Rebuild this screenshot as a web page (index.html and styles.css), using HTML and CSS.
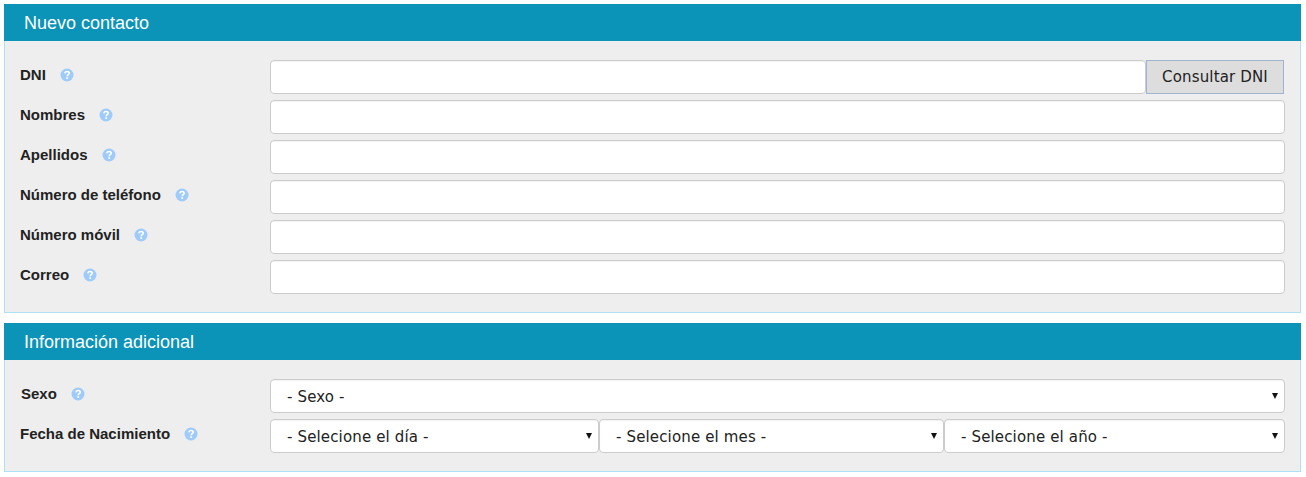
FILE: index.html
```html
<!DOCTYPE html>
<html lang="es">
<head>
<meta charset="utf-8">
<title>Nuevo contacto</title>
<link rel="stylesheet" href="styles.css">
</head>
<body>
<svg class="sprite" width="0" height="0"><symbol id="help" viewBox="0 0 14 14"><circle cx="7" cy="7" r="6.5" fill="#9fcbfa"/><path d="M4.9 5.4C5 4.2 5.9 3.5 7.1 3.5 8.3 3.5 9.2 4.2 9.2 5.3 9.2 6.7 7.2 6.8 7.2 8.3" fill="none" stroke="#fff" stroke-width="1.6"/><rect x="6.3" y="9.2" width="1.8" height="1.7" fill="#fff"/></symbol></svg>

<section class="panel panel-first">
  <h2 class="panel-title">Nuevo contacto</h2>
  <div class="panel-body">
    <div class="row">
      <label class="label">DNI <svg class="help"><use href="#help"/></svg></label>
      <div class="field field-group">
        <input class="input" type="text">
        <button class="btn" type="button">Consultar DNI</button>
      </div>
    </div>
    <div class="row">
      <label class="label">Nombres <svg class="help"><use href="#help"/></svg></label>
      <div class="field"><input class="input" type="text"></div>
    </div>
    <div class="row">
      <label class="label">Apellidos <svg class="help"><use href="#help"/></svg></label>
      <div class="field"><input class="input" type="text"></div>
    </div>
    <div class="row">
      <label class="label">Número de teléfono <svg class="help"><use href="#help"/></svg></label>
      <div class="field"><input class="input" type="text"></div>
    </div>
    <div class="row">
      <label class="label">Número móvil <svg class="help"><use href="#help"/></svg></label>
      <div class="field"><input class="input" type="text"></div>
    </div>
    <div class="row">
      <label class="label">Correo <svg class="help"><use href="#help"/></svg></label>
      <div class="field"><input class="input" type="text"></div>
    </div>
  </div>
</section>

<section class="panel">
  <h2 class="panel-title">Información adicional</h2>
  <div class="panel-body">
    <div class="row">
      <label class="label label-sexo">Sexo <svg class="help"><use href="#help"/></svg></label>
      <div class="field">
        <div class="select-wrap"><select class="select"><option>- Sexo -</option></select></div>
      </div>
    </div>
    <div class="row">
      <label class="label">Fecha de Nacimiento <svg class="help"><use href="#help"/></svg></label>
      <div class="field field-dates">
        <div class="select-wrap"><select class="select"><option>- Selecione el día -</option></select></div>
        <div class="select-wrap"><select class="select"><option>- Selecione el mes -</option></select></div>
        <div class="select-wrap"><select class="select"><option>- Selecione el año -</option></select></div>
      </div>
    </div>
  </div>
</section>
</body>
</html>
```

FILE: styles.css
```css
* { box-sizing: border-box; }

html, body { background: #fff; }

body {
  margin: 0;
  padding: 4px 5px 0 4px;
  font-family: "Liberation Sans", Arial, sans-serif;
  color: #222;
}

.sprite { position: absolute; }

.panel-first { margin-bottom: 10px; }

.panel-title {
  margin: 0;
  height: 37px;
  padding-left: 20px;
  background: #0b93b8;
  color: #fff;
  font-size: 18px;
  font-weight: 400;
  line-height: 38px;
}

.panel-body {
  display: flex;
  flex-direction: column;
  gap: 6px;
  padding: 19px 15px 18px 15px;
  background: #eee;
  border: 1px solid #ade2f3;
  border-top: 0;
}

.row {
  display: flex;
  height: 34px;
}

.label {
  display: flex;
  flex: 0 0 250px;
  align-items: flex-start;
  gap: 14px;
  padding-top: 6px;
  font-size: 15px;
  font-weight: 700;
  line-height: 17px;
  color: #222;
}

.label-sexo { padding-left: 1px; }

.help {
  flex: none;
  width: 14px;
  height: 14px;
  margin-top: 2px;
}

.field {
  flex: 1;
  display: flex;
  min-width: 0;
}

.input, .select {
  width: 100%;
  height: 34px;
  background: #fff;
  border: 1px solid #ccc;
  border-radius: 4px;
  box-shadow: inset 0 1px 1px rgba(0, 0, 0, .05);
}

.field-group .input { flex: 1; min-width: 0; }

.btn {
  flex: none;
  width: 138px;
  height: 34px;
  margin: 0 1px 0 0;
  padding: 0;
  background: #ddd;
  border: 1px solid #9fb4d0;
  font-family: "DejaVu Sans", Verdana, sans-serif;
  font-size: 15px;
  letter-spacing: 0.15px;
  color: #222;
}

.select-wrap {
  position: relative;
  flex: 1;
  min-width: 0;
}

.select-wrap::after {
  content: "";
  position: absolute;
  top: 14px;
  right: 7px;
  border-left: 3px solid transparent;
  border-right: 3px solid transparent;
  border-top: 6px solid #111;
  pointer-events: none;
}

.select {
  display: block;
  appearance: none;
  padding: 2px 12px 0 16px;
  font-family: "DejaVu Sans", Verdana, sans-serif;
  font-size: 15px;
  letter-spacing: 0.15px;
  color: #222;
}

.field-dates .select-wrap:nth-child(1) { flex: 0 0 329px; }
.field-dates .select-wrap:nth-child(2) { flex: 0 0 345px; }
```
